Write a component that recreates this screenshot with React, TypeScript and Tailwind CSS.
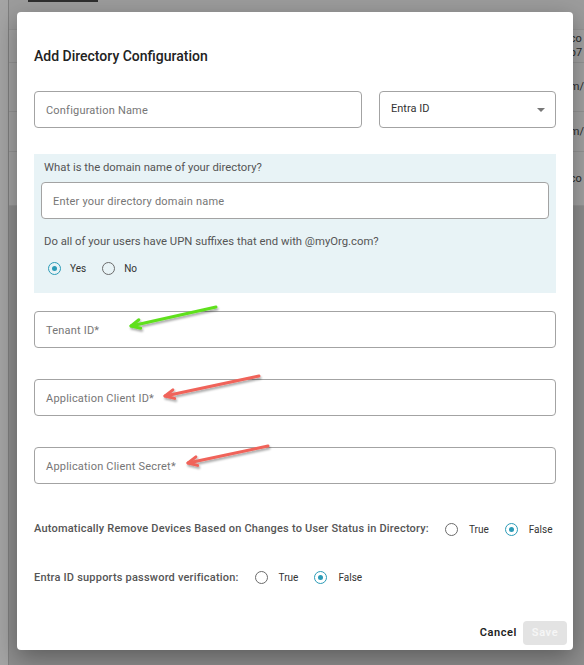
import { ReactNode } from 'react'

const font = { fontFamily: 'Roboto, "Liberation Sans", sans-serif' }

function Radio({ checked }: { checked?: boolean }) {
  return checked ? (
    <span className="flex h-[13px] w-[13px] items-center justify-center rounded-full border border-[#2b9bb7]">
      <span className="h-[5px] w-[5px] rounded-full bg-[#2b9bb7]" />
    </span>
  ) : (
    <span className="h-[13px] w-[13px] rounded-full border border-[#6b6b6b]" />
  )
}

function Option({ label, checked, gap = 'mr-[16px]', space = 'ml-[11px]' }: { label: string; checked?: boolean; gap?: string; space?: string }) {
  return (
    <label className={`flex items-center ${gap}`}>
      <Radio checked={checked} />
      <span className={`${space} text-[10px] text-[#333]`}>{label}</span>
    </label>
  )
}

function Field({ placeholder, className = '' }: { placeholder: string; className?: string }) {
  return (
    <div className={`flex h-[37px] items-center rounded-[4px] border border-[#a3a3a3] bg-white px-[11px] pt-[3px] ${className}`}>
      <span className="text-[11px] tracking-[0.2px] text-[#767676]">{placeholder}</span>
    </div>
  )
}

function Arrow({ x1, y1, x2, y2, color }: { x1: number; y1: number; x2: number; y2: number; color: string }) {
  const a = Math.atan2(y2 - y1, x2 - x1)
  const len = 10
  const p1 = [x2 - len * Math.cos(a - 0.45), y2 - len * Math.sin(a - 0.45)]
  const p2 = [x2 - len * Math.cos(a + 0.45), y2 - len * Math.sin(a + 0.45)]
  return (
    <g stroke={color} strokeWidth={3} strokeLinecap="round" fill="none" filter="url(#sh)">
      <line x1={x1} y1={y1} x2={x2} y2={y2} />
      <polyline points={`${p1[0]},${p1[1]} ${x2},${y2} ${p2[0]},${p2[1]}`} strokeLinejoin="round" />
    </g>
  )
}

function TableRow({ children, h }: { children: ReactNode; h: string }) {
  return (
    <div className={`flex flex-col justify-center border-b border-[#959595] pl-[561px] text-[11px] leading-[14px] text-[#2a2a2a] ${h}`}>
      {children}
    </div>
  )
}

export default function App() {
  return (
    <div className="relative h-[665px] w-[584px] overflow-hidden bg-[#8e8e8e]" style={font}>
      {/* dimmed page behind the dialog */}
      <div className="flex h-full">
        <div className="w-[12px] bg-[#a4a4a4]" />
        <div className="w-[2px] bg-[#7f7f7f]" />
        <div className="flex flex-1 flex-col">
          <div className="h-[30px] border-b border-[#959595] bg-[#9c9c9c]">
            <div className="ml-[19px] h-[2px] w-[70px] bg-[#2e2e2e]" />
          </div>
          <div className="bg-[#a3a3a3]">
            <TableRow h="h-[33px]">
              <span>co</span>
              <span>b7</span>
            </TableRow>
            <TableRow h="h-[49px]">
              <span>m/</span>
            </TableRow>
            <TableRow h="h-[40px]">
              <span>m/</span>
            </TableRow>
            <TableRow h="h-[54px]">
              <span>co</span>
            </TableRow>
          </div>
        </div>
      </div>

      {/* dialog */}
      <div className="absolute left-[17px] top-[12px] flex h-[638px] w-[556px] flex-col rounded-[4px] bg-white px-[17px] shadow-[0_8px_24px_rgba(0,0,0,0.35)]">
        <h2 className="pt-[34px] text-[14px] font-medium leading-5 text-[#222]">Add Directory Configuration</h2>

        <div className="mt-[25px] flex gap-[17px]">
          <Field placeholder="Configuration Name" className="w-[328px]" />
          <div className="flex h-[37px] flex-1 items-center justify-between rounded-[4px] border border-[#a3a3a3] pl-[11px] pr-[10px]">
            <span className="text-[11px] text-[#333]">Entra ID</span>
            <svg width="8" height="4" viewBox="0 0 8 4">
              <path d="M0 0h8L4 4z" fill="#777" />
            </svg>
          </div>
        </div>

        <div className="mt-[26px] h-[139px] bg-[#e8f3f6] px-[7px] pt-[7px]">
          <p className="pl-[3px] text-[11.3px] leading-[14px] text-[#555]">What is the domain name of your directory?</p>
          <Field placeholder="Enter your directory domain name" className="mt-[7px]" />
          <p className="mt-[16px] pl-[3px] text-[11.3px] leading-[14px] text-[#555]">
            Do all of your users have UPN suffixes that end with @myOrg.com?
          </p>
          <div className="mt-[12px] flex items-center pl-[7px]">
            <Option label="Yes" checked gap="mr-[16px]" space="ml-[9px]" />
            <Option label="No" space="ml-[9px]" />
          </div>
        </div>

        <Field placeholder="Tenant ID*" className="mt-[18px]" />
        <Field placeholder="Application Client ID*" className="mt-[31px]" />
        <Field placeholder="Application Client Secret*" className="mt-[31px]" />

        <div className="mt-[37px] flex items-center">
          <span className="mr-[16px] whitespace-nowrap text-[11px] font-medium tracking-[0.2px] text-[#555]">
            Automatically Remove Devices Based on Changes to User Status in Directory:
          </span>
          <Option label="True" />
          <Option label="False" checked />
        </div>

        <div className="mt-[32px] flex items-center">
          <span className="mr-[16px] whitespace-nowrap text-[11px] font-medium tracking-[0.2px] text-[#555]">
            Entra ID supports password verification:
          </span>
          <Option label="True" />
          <Option label="False" checked />
        </div>

        <div className="mt-auto mb-[5px] flex items-center justify-end gap-[6px]">
          <button className="text-[11px] font-semibold tracking-[0.6px] text-[#222]">Cancel</button>
          <button className="mr-[-11px] h-[24px] w-[44px] rounded-[4px] bg-[#e3e3e3] text-[11px] font-semibold tracking-[0.6px] text-[#f6f6f6]">
            Save
          </button>
        </div>
      </div>

      {/* annotation arrows */}
      <svg className="pointer-events-none absolute left-0 top-0" width="584" height="665">
        <defs>
          <filter id="sh" x="-20%" y="-50%" width="140%" height="200%">
            <feDropShadow dx="1" dy="2" stdDeviation="1.2" floodColor="#000" floodOpacity="0.35" />
          </filter>
        </defs>
        <Arrow x1={216} y1={307} x2={131} y2={326} color="#5fe01f" />
        <Arrow x1={259} y1={376} x2={165} y2={396} color="#f0645a" />
        <Arrow x1={268} y1={446} x2={188} y2={463} color="#f0645a" />
      </svg>
    </div>
  )
}
